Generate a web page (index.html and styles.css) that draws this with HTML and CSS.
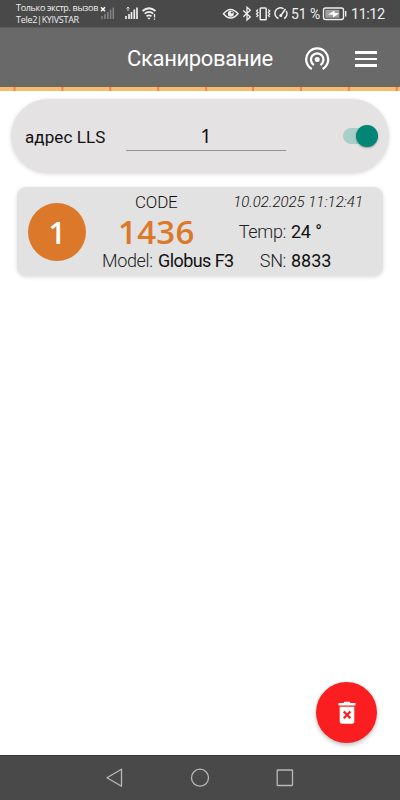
FILE: index.html
```html
<!DOCTYPE html>
<html lang="ru">
<head>
<meta charset="utf-8">
<title>Сканирование</title>
<link rel="stylesheet" href="styles.css">
</head>
<body>
<div class="screen">
  <div class="status">
    <div class="carrier"><div class="carrier-top">Только экстр. вызов</div><div class="carrier-sim">Tele2|KYIVSTAR</div></div>
    <svg class="signals" width="60" height="27" viewBox="100 0 60 27">
      <path d="M101 7.300l4 4m0-4l-4 4" stroke="#fff" stroke-width="1.500"/>
      <path d="M102 19v-3M105 19v-5M107.800 19v-7M110.600 19v-9.500M113.300 19v-11.500" stroke="#858585" stroke-width="1.500"/>
      <path d="M126 19v-3M129 19v-5M131.500 19v-7M134.300 19v-9.500M137 19v-11.500" stroke="#eee" stroke-width="1.700"/>
      <path d="M128 7v4M126.500 8.500l1.500-1.500 1.500 1.500" stroke="#ddd" fill="none"/>
      <path d="M142.500 11q6.500-5.500 13 0M144.700 13.700q4.300-3.500 8.600 0M146.500 16.300q2.500-1.800 5 0" fill="none" stroke="#eee" stroke-width="1.700"/>
      <path d="M147.300 17.800h3.400l-1.700 1.900z" fill="#eee"/>
      <path d="M154.500 14v3.500M154.500 18.500v1.300" stroke="#eee" stroke-width="1.300"/>
    </svg>
    <svg class="system" width="68" height="27" viewBox="222 0 68 27" fill="none" stroke="#eee" stroke-width="1.300">
      <path d="M223.500 13.800q7-8.800 14.500 0q-7.500 8.600-14.500 0z" stroke-width="1.500"/>
      <circle cx="230.800" cy="13.700" r="3" fill="#eee" stroke="none"/><circle cx="231.800" cy="12.500" r="1" fill="#494949" stroke="none"/>
      <path d="M243.300 10.500l7 6.500-3.300 3V7.300l3.300 3-7 6.500"/>
      <rect x="260.200" y="8" width="6" height="11.700" rx=".8" stroke-width="1.500"/>
      <path d="M258 9.500l-1.500 1.500 1.500 1.500-1.500 1.500 1.500 1.500-1.500 1.500M268.300 9.500l1.500 1.500-1.500 1.500 1.500 1.500-1.500 1.500 1.500 1.500" stroke-width="1.200"/>
      <path d="M278.500 18.500a5.500 5.500 0 1 1 5-9.700M286.300 11a5.500 5.500 0 0 1-2.200 7.500M280.500 16l5-7" stroke-width="1.500"/>
      <circle cx="280.800" cy="15.500" r="1.500" fill="#eee" stroke="none"/>
    </svg>
    <span class="percent">51 %</span>
    <svg class="battery" width="25" height="27" viewBox="322 0 25 27">
      <rect x="323.500" y="8" width="20" height="11.500" rx="2" fill="none" stroke="#eee" stroke-width="1.400"/>
      <rect x="325.300" y="9.800" width="14" height="7.900" fill="#a0a0a0"/>
      <path d="M345.700 11v5.500" stroke="#eee" stroke-width="1.400"/>
      <path d="M328 14.500l6.500-4v2.400l4.800.3-6.300 4.300v-2.700z" fill="#fff"/>
    </svg>
    <span class="clock">11:12</span>
  </div>
  <header class="bar">
    <h1 class="title">Сканирование</h1>
    <svg class="cast" width="26" height="26" viewBox="304 46 26 26" fill="none" stroke="#fff" stroke-width="2.300">
      <circle cx="317.200" cy="59.500" r="2.500" fill="#fff" stroke="none"/>
      <path d="M314 64.900a6.200 6.200 0 1 1 6.400 0M311.800 69a11 11 0 1 1 10.800 0"/>
    </svg>
    <div class="menu"><i></i><i></i><i></i></div>
  </header>
  <div class="strip"></div>
  <section class="address">
    <span class="label">адрес LLS</span>
    <div class="field">1</div>
    <div class="toggle"><div class="knob"></div></div>
  </section>
  <section class="device">
    <div class="number">1</div>
    <div class="code-col">
      <div class="caption">CODE</div>
      <div class="code">1436</div>
      <div class="row model"><span class="key">Model:</span><span class="value">Globus F3</span></div>
    </div>
    <div class="data-col">
      <div class="date">10.02.2025 11:12:41</div>
      <div class="row temp"><span class="key">Temp:</span><span class="value">24 <span class="degree">°</span></span></div>
      <div class="row serial"><span class="key">SN:</span><span class="value">8833</span></div>
    </div>
  </section>
  <div class="fab">
    <svg width="20" height="24" viewBox="0 0 20 24"><path d="M1.500 2h5l1-1.200h5l1 1.200h5v2.600h-17zM2.700 5.800h14.600v14.500a2.500 2.500 0 0 1-2.500 2.500H5.200a2.500 2.500 0 0 1-2.500-2.500z" fill="#fff"/><path d="M6.800 10.500l6.600 6.800m0-6.800l-6.600 6.800" stroke="#fa1e20" stroke-width="2.300"/></svg>
  </div>
  <nav class="nav">
    <svg width="400" height="44" viewBox="0 756 400 44" fill="none" stroke="#b9b9b9" stroke-width="1.300" stroke-linejoin="round"><path d="M107 777.700l14.500-8.500v17z"/><circle cx="200" cy="777.700" r="8.500"/><rect x="277.200" y="770" width="15.300" height="15.500" rx=".5"/></svg>
  </nav>
</div>
</body>
</html>
```
FILE: styles.css
```css
* { box-sizing: border-box; }
body { margin: 0; font-family: Roboto, "Liberation Sans", sans-serif; color: #111; background: #fff; }
svg { display: block; flex: none; }
.screen { width: 400px; height: 800px; display: flex; flex-direction: column; overflow: hidden; position: relative; }
.status { height: 27px; flex: none; background: #494949; color: #eee; display: flex; white-space: nowrap; }
.carrier { width: 84px; flex: none; margin-left: 16px; padding-top: 2px; font-size: 9px; line-height: 12px; font-family: "Open Sans", sans-serif; }
.carrier-top { letter-spacing: -0.320px; }
.carrier-sim { letter-spacing: -0.300px; }
.system { margin-left: 62px; }
.percent { width: 32px; flex: none; padding-left: 1px; font-size: 14px; letter-spacing: -0.100px; line-height: 29px; }
.clock { margin-left: 4px; font-size: 14.500px; letter-spacing: -0.500px; line-height: 29px; }
.bar { height: 60px; flex: none; background: #696969; border-top: 1px solid #5c5c5c; color: #fff; display: flex; align-items: center; }
.title { margin: 2px 0 0 127px; width: 177px; font-size: 22px; letter-spacing: -0.350px; font-weight: 400; line-height: 28px; white-space: nowrap; }
.cast { margin-top: 3px; }
.menu { margin: 3px 0 0 25px; width: 22px; display: grid; gap: 4px; }
.menu i { height: 2.400px; background: #fff; }
.strip { height: 4px; flex: none; background: repeating-linear-gradient(90deg, #f18449 0 2px, #f7bd6c 2px 47.800px) 13.500px 0; background-size: 430.200px 4px; }
.address { height: 74px; flex: none; margin: 8px 11px 0; padding: 0 11px 0 14px; border-radius: 37px; background: #e4e2e3; box-shadow: 0 1px 4px #00000026; display: flex; align-items: center; }
.label { width: 101px; font-size: 17px; letter-spacing: 0.100px; white-space: nowrap; padding-top: 1px; }
.field { width: 160px; height: 30px; border-bottom: 1px solid #929292; font-family: "Noto Sans", sans-serif; font-size: 20px; line-height: 29px; text-align: center; }
.toggle { width: 34px; height: 16px; margin: 0 1px 0 auto; border-radius: 8px; background: #a9cec8; display: flex; justify-content: flex-end; align-items: center; }
.knob { width: 22px; height: 22px; margin-right: -1px; border-radius: 50%; background: #008577; box-shadow: 0 1px 2px #0005; flex: none; }
.device { height: 89px; flex: none; margin: 14px 17px 0; padding-left: 11px; border-radius: 9px; background: #e2e2e2; box-shadow: 0 1px 4px #00000026; display: flex; white-space: nowrap; }
.number { width: 58px; height: 58px; flex: none; margin-top: 16px; border-radius: 50%; background: #dc7829; color: #fff; text-align: center; font: 600 30px/59px "Open Sans", sans-serif; }
.code-col { width: 136px; flex: none; margin-left: 16px; padding-top: 5px; }
.caption { padding-left: 33px; font-size: 17px; font-weight: 300; letter-spacing: -0.200px; line-height: 21px; }
.code { padding-left: 16px; color: #dc7829; letter-spacing: 0.300px; font: 600 33px/38px "Open Sans", sans-serif; }
.row { display: flex; gap: 5px; line-height: 22px; }
.key { font-size: 18px; font-weight: 300; letter-spacing: -0.350px; color: #222; }
.value { font-size: 18px; }
.model { margin-top: -1px; }
.model .key { width: 51px; }
.model .value { letter-spacing: -0.580px; }
.data-col { width: 125px; flex: none; padding-top: 5px; }
.date { display: flex; justify-content: flex-end; font-size: 15px; font-weight: 300; font-style: italic; line-height: 21px; }
.data-col .key { width: 48px; text-align: right; }
.temp { margin-top: 8px; }
.serial { margin-top: 7px; }
.temp .value { letter-spacing: -0.300px; }
.degree { margin-left: 0.500px; }
.fab { position: absolute; left: 316px; top: 682px; width: 61px; height: 61px; border-radius: 50%; background: #fa1e20; box-shadow: 0 2px 4px #0004; display: flex; align-items: center; justify-content: center; }
.nav { height: 45px; margin-top: auto; background: #494949; border-top: 1px solid #333; }
```
